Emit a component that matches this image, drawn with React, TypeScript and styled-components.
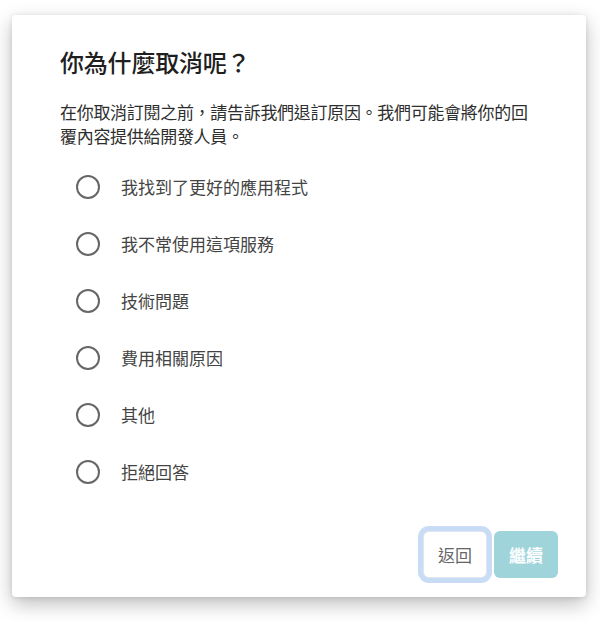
import React from 'react';
import styled, { createGlobalStyle } from 'styled-components';

const GlobalStyle = createGlobalStyle`
  html, body {
    margin: 0;
    padding: 0;
    background: #ffffff;
  }
  body {
    font-family: "Noto Sans CJK TC", "Noto Sans", sans-serif;
  }
`;

const Page = styled.div`
  width: 600px;
  height: 622px;
  padding: 15px 14px 25px 12px;
  box-sizing: border-box;
`;

const Dialog = styled.div`
  width: 574px;
  height: 582px;
  box-sizing: border-box;
  padding: 31px 28px 19px 48px;
  background: #ffffff;
  border-radius: 4px;
  box-shadow: 0 7px 20px rgba(0, 0, 0, 0.26), 0 1px 5px rgba(0, 0, 0, 0.1);
  display: flex;
  flex-direction: column;
`;

const Title = styled.h2`
  margin: 0;
  font-size: 24px;
  line-height: 32px;
  font-weight: 500;
  color: #1f1f1f;
  letter-spacing: -0.2px;
`;

const Description = styled.p`
  margin: 22px 20px 0 0;
  font-size: 17px;
  line-height: 24px;
  letter-spacing: -0.3px;
  color: #2e2e2e;
`;

const Options = styled.div`
  margin-top: 10px;
  display: flex;
  flex-direction: column;
`;

const Option = styled.label`
  height: 57px;
  display: flex;
  align-items: center;
  padding-left: 16px;
  cursor: pointer;
`;

const Radio = styled.span<{ $checked: boolean }>`
  width: 24px;
  height: 24px;
  box-sizing: border-box;
  border-radius: 50%;
  border: 2px solid #666666;
  margin-right: 21px;
  display: flex;
  align-items: center;
  justify-content: center;
  &::after {
    content: '';
    width: 12px;
    height: 12px;
    border-radius: 50%;
    background: #666666;
    display: ${(p) => (p.$checked ? 'block' : 'none')};
  }
`;

const OptionText = styled.span`
  font-size: 17px;
  color: #444444;
`;

const Actions = styled.div`
  margin-top: auto;
  display: flex;
  justify-content: flex-end;
  gap: 7px;
`;

const Button = styled.button<{ $primary?: boolean }>`
  height: 47px;
  min-width: 64px;
  padding: 0 12px;
  box-sizing: border-box;
  border-radius: 6px;
  font-family: "Noto Sans CJK TC", "Noto Sans", sans-serif;
  font-size: 17px;
  cursor: pointer;
  border: ${(p) => (p.$primary ? 'none' : '1px solid #dfe6ee')};
  background: ${(p) => (p.$primary ? '#9fd4db' : '#ffffff')};
  color: ${(p) => (p.$primary ? '#ffffff' : '#666666')};
  font-weight: ${(p) => (p.$primary ? 700 : 400)};
  box-shadow: ${(p) => (p.$primary ? 'none' : '0 0 0 5px #c8dcf6')};
  outline: none;
`;

const reasons = [
  '我找到了更好的應用程式',
  '我不常使用這項服務',
  '技術問題',
  '費用相關原因',
  '其他',
  '拒絕回答',
];

const App: React.FC = () => {
  const [selected, setSelected] = React.useState<number | null>(null);

  return (
    <>
      <GlobalStyle />
      <Page>
        <Dialog>
          <Title>你為什麼取消呢？</Title>
          <Description>
            在你取消訂閱之前，請告訴我們退訂原因。我們可能會將你的回覆內容提供給開發人員。
          </Description>
          <Options>
            {reasons.map((r, i) => (
              <Option key={r} onClick={() => setSelected(i)}>
                <Radio $checked={selected === i} />
                <OptionText>{r}</OptionText>
              </Option>
            ))}
          </Options>
          <Actions>
            <Button>返回</Button>
            <Button $primary disabled={selected === null}>
              繼續
            </Button>
          </Actions>
        </Dialog>
      </Page>
    </>
  );
};

export default App;
